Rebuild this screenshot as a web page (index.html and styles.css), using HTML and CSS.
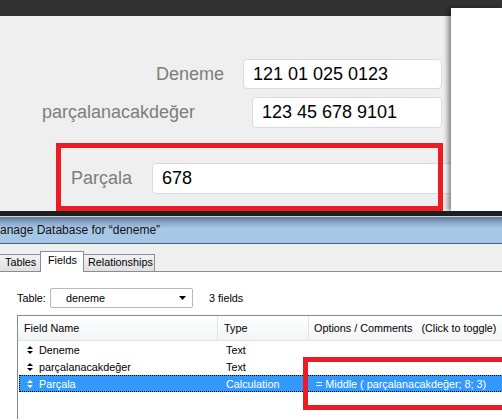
FILE: index.html
```html
<!DOCTYPE html>
<html>
<head>
<meta charset="utf-8">
<link rel="stylesheet" href="styles.css">
</head>
<body>
<div class="top">
  <div class="topbar"></div>
  <div class="form">
    <div class="row row1">
      <div class="lbl">Deneme</div>
      <div class="fld">121 01 025 0123</div>
    </div>
    <div class="row row2">
      <div class="lbl">parçalanacakdeğer</div>
      <div class="fld">123 45 678 9101</div>
    </div>
    <div class="row row3">
      <div class="lbl">Parçala</div>
      <div class="fld">678</div>
    </div>
  </div>
  <div class="panel"></div>
  <div class="redbox red1"></div>
</div>
<div class="dlg">
  <div class="titlebar">anage Database for “deneme”</div>
  <div class="tabs">
    <div class="tab t-tables">Tables</div>
    <div class="tab t-fields sel">Fields</div>
    <div class="tab t-rel">Relationships</div>
  </div>
  <div class="content">
    <div class="tablerow">
      <span class="tlabel">Table:</span>
      <div class="select"><span>deneme</span><svg class="caret" width="7" height="4" viewBox="0 0 7 4"><polygon points="0,0 7,0 3.5,4" fill="#000"/></svg></div>
      <span class="count">3 fields</span>
    </div>
    <div class="list">
      <div class="lhead">
        <div class="c1">Field Name</div>
        <div class="c2">Type</div>
        <div class="c3">Options / Comments&nbsp;&nbsp;&nbsp;(Click to toggle)</div>
      </div>
      <div class="lrow">
        <div class="c1"><svg class="mv" width="6" height="8" viewBox="0 0 6 8"><polygon points="0,3 3,0 6,3"/><polygon points="0,5 3,8 6,5"/></svg>Deneme</div>
        <div class="c2">Text</div>
        <div class="c3"></div>
      </div>
      <div class="lrow">
        <div class="c1"><svg class="mv" width="6" height="8" viewBox="0 0 6 8"><polygon points="0,3 3,0 6,3"/><polygon points="0,5 3,8 6,5"/></svg>parçalanacakdeğer</div>
        <div class="c2">Text</div>
        <div class="c3"></div>
      </div>
      <div class="lrow selrow">
        <div class="c1"><svg class="mv" width="6" height="8" viewBox="0 0 6 8"><polygon points="0,3 3,0 6,3"/><polygon points="0,5 3,8 6,5"/></svg>Parçala</div>
        <div class="c2">Calculation</div>
        <div class="c3">= Middle ( parçalanacakdeğer; 8; 3)</div>
      </div>
    </div>
    <div class="redbox red2"></div>
  </div>
</div>
</body>
</html>
```
FILE: styles.css
```css
* { box-sizing: border-box; }
html, body { margin: 0; padding: 0; }
body {
  width: 502px;
  height: 420px;
  overflow: hidden;
  background: #fff;
  font-family: "Liberation Sans", Arial, sans-serif;
}
.top {
  position: relative;
  height: 211px;
  background: #efefef;
  overflow: hidden;
}
.topbar { height: 16px; background: #323232; }
.form { padding-top: 43px; }
.row { display: flex; align-items: center; }
.lbl {
  text-align: right;
  color: #7d7d7d;
  font-size: 18px;
  flex: none;
}
.fld {
  flex: none;
  background: #fff;
  border: 1px solid #dadada;
  border-radius: 4px;
  font-size: 18px;
  color: #000;
  display: flex;
  align-items: center;
  padding-left: 9px;
}
.row1 { height: 30px; }
.row1 .lbl { width: 224px; margin-right: 19px; }
.row1 .fld { width: 199px; height: 30px; }
.row2 { height: 31px; margin-top: 8px; }
.row2 .lbl { width: 195px; margin-right: 57px; }
.row2 .fld { width: 190px; height: 31px; }
.row3 { height: 31px; margin-top: 35px; }
.row3 .lbl { width: 132px; margin-right: 20px; }
.row3 .fld { width: 300px; height: 31px; border-radius: 4px 0 0 4px; }
.panel {
  position: absolute;
  left: 451px;
  right: 0;
  top: 8px;
  bottom: 0;
  background: #fff;
  box-shadow: -3px 0 5px rgba(0,0,0,0.45);
}
.redbox {
  position: absolute;
  border: 5px solid #ed1c24;
}
.red1 { left: 56px; top: 143px; width: 387px; height: 68px; }

.dlg {
  border-top: 5px solid #1e1e1e;
  font-family: "Liberation Sans", Arial, sans-serif;
}
.titlebar {
  height: 28px;
  border-top: 1px solid #c9d6e4;
  border-bottom: 1px solid #4f627a;
  background: linear-gradient(to bottom, #5e7594 0%, #8fadcf 25%, #a8c8e8 45%, #a5c5e6 100%);
  font-size: 12px;
  color: #111;
  line-height: 26px;
  padding-left: 0;
  white-space: nowrap;
}
.tabs {
  height: 28px;
  background: #efefef;
  border-bottom: 1px solid #898c95;
  display: flex;
  align-items: flex-end;
  font-size: 10.8px;
  color: #000;
}
.tab {
  border: 1px solid #898c95;
  border-bottom: none;
  background: linear-gradient(to bottom, #f2f2f2, #e0e0e0);
  height: 17px;
  line-height: 15px;
  padding: 0 4px;
  white-space: nowrap;
}
.t-tables { margin-left: -2px; width: 42px; padding-left: 6px; border-right: none; }
.t-fields {
  width: 44px;
  height: 21px;
  margin-bottom: -1px;
  background: #fff;
  padding-left: 7px;
  line-height: 17px;
}
.t-rel { width: 71px; padding-left: 4px; border-left: none; }

.content {
  position: relative;
  height: 147px;
  background: #fff;
  overflow: hidden;
  font-size: 10.8px;
  color: #000;
}
.tablerow {
  display: flex;
  align-items: center;
  height: 20px;
  margin-top: 16px;
  padding-left: 17px;
}
.tlabel { width: 33px; }
.select {
  width: 143px;
  height: 20px;
  border: 1px solid #b9b9b9;
  border-radius: 2px;
  display: flex;
  align-items: center;
  justify-content: space-between;
  padding: 0 6px 0 15px;
}
.caret { display: block; }
.count { margin-left: 16px; }
.list {
  margin-top: 7px;
  margin-left: 17px;
  width: 500px;
  height: 120px;
  border: 1px solid #828790;
  border-right: none;
}
.lhead {
  display: flex;
  height: 25px;
  align-items: center;
  background: linear-gradient(to bottom, #ffffff, #f3f4f6);
  border-bottom: 1px solid #e2e3e5;
}
.lhead .c1, .lhead .c2, .lhead .c3 { height: 100%; display: flex; align-items: center; }
.lhead .c1 { border-right: 1px solid #e2e3e5; padding-left: 6px; }
.lhead .c2 { border-right: 1px solid #e2e3e5; }
.c1 { width: 200px; flex: none; padding-left: 8px; display: flex; align-items: center; }
.c2 { width: 91px; flex: none; padding-left: 6px; }
.c3 { flex: 1; padding-left: 5px; white-space: nowrap; }
.lrow {
  display: flex;
  align-items: center;
  height: 17px;
  white-space: nowrap;
  border: 1px solid transparent;
  margin-left: 1px;
}
.lrow .c1 { padding-left: 7px; }
.mv { fill: #000; margin-right: 6px; flex: none; }
.selrow {
  background: #3399ff;
  color: #fff;
  border: 1px dotted #000;
  height: 17px;
}
.selrow .mv { fill: #fff; }
.red2 { left: 303px; top: 85px; width: 220px; height: 53px; }
```
